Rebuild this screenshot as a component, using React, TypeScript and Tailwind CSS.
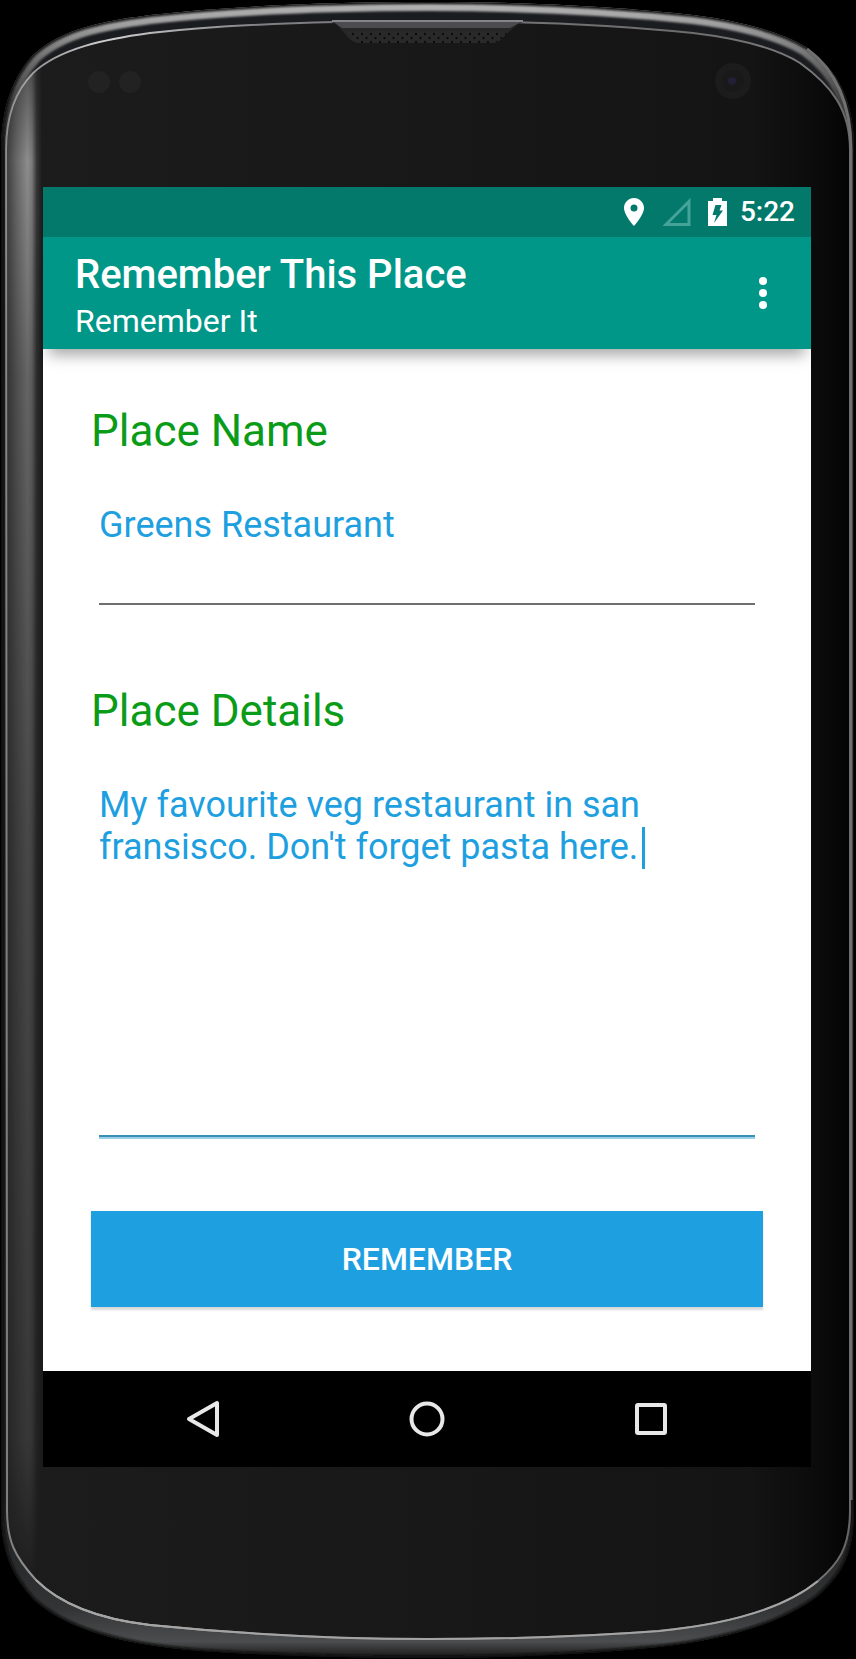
import { useState } from "react";

const NAV_ICON = "h-12 w-12 fill-none stroke-[#e8e8e8] stroke-[4]";

// phone body drawn behind the screen ============================
function PhoneFrame() {
  const outer =
    "M1 150 C1 105 14 76 33 55 C62 28 105 21 150 15 C240 5 340 2 428 2 C516 2 600 5 693 15 C735 20 780 31 806 47 C838 70 854 100 854 150 V1510 C854 1555 842 1574 818 1596 C780 1625 720 1640 659 1647 C580 1655 500 1658 428 1658 C350 1658 280 1656 200 1651 C110 1644 62 1625 34 1600 C10 1574 1 1550 1 1510 Z";
  const inner =
    "M6 150 C6 108 20 86 33 73 C60 48 106 39 150 33 C240 23 340 21 428 21 C516 21 600 23 693 33 C735 38 776 48 800 63 C832 86 850 110 850 150 V1510 C850 1548 838 1564 818 1581 C780 1612 720 1625 659 1631 C580 1637 500 1639 428 1639 C350 1639 250 1635 150 1625 C90 1618 56 1600 36 1580 C14 1556 7 1540 7 1510 Z";

  return (
    <svg
      className="absolute inset-0 h-full w-full"
      viewBox="0 0 856 1659"
      preserveAspectRatio="none"
      aria-hidden="true"
    >
      <defs>
        <linearGradient id="rim" x1="0" y1="2" x2="0" y2="150" gradientUnits="userSpaceOnUse">
          <stop offset="0" stopColor="#b4b4b4" />
          <stop offset="0.15" stopColor="#a0a0a0" />
          <stop offset="0.4" stopColor="#6c6c6c" />
          <stop offset="0.7" stopColor="#3c3c3c" />
          <stop offset="1" stopColor="#222222" />
        </linearGradient>
        <linearGradient id="band" x1="0" y1="0" x2="0" y2="1">
          <stop offset="0" stopColor="#1b1c20" />
          <stop offset="0.9" stopColor="#1a1b1c" />
          <stop offset="0.97" stopColor="#333435" />
          <stop offset="0.99" stopColor="#4c4d4e" />
          <stop offset="1" stopColor="#161616" />
        </linearGradient>
        <linearGradient id="glass" x1="0" y1="0" x2="1" y2="0">
          <stop offset="0" stopColor="#1c1c1c" />
          <stop offset="0.5" stopColor="#181818" />
          <stop offset="0.88" stopColor="#141414" />
          <stop offset="0.96" stopColor="#0b0b0b" />
          <stop offset="1" stopColor="#040404" />
        </linearGradient>
        <linearGradient id="glare" x1="6" x2="42" y1="0" y2="0" gradientUnits="userSpaceOnUse">
          <stop offset="0" stopColor="#fff" stopOpacity="0.14" />
          <stop offset="0.3" stopColor="#fff" stopOpacity="0.34" />
          <stop offset="0.6" stopColor="#fff" stopOpacity="0.5" />
          <stop offset="0.72" stopColor="#fff" stopOpacity="0.42" />
          <stop offset="0.85" stopColor="#fff" stopOpacity="0.12" />
          <stop offset="1" stopColor="#fff" stopOpacity="0" />
        </linearGradient>
        <linearGradient id="fade" x1="0" x2="0" y1="70" y2="1590" gradientUnits="userSpaceOnUse">
          <stop offset="0" stopColor="#fff" stopOpacity="0.5" />
          <stop offset="0.06" stopColor="#fff" />
          <stop offset="0.2" stopColor="#fff" stopOpacity="0.65" />
          <stop offset="0.5" stopColor="#fff" stopOpacity="0.4" />
          <stop offset="0.9" stopColor="#fff" stopOpacity="0.25" />
          <stop offset="1" stopColor="#fff" stopOpacity="0" />
        </linearGradient>
        <linearGradient id="edge" x1="0" x2="1" y1="0" y2="0">
          <stop offset="0" stopColor="#7c7c7c" />
          <stop offset="0.12" stopColor="#d0d0d0" />
          <stop offset="0.3" stopColor="#808085" />
          <stop offset="0.8" stopColor="#6c6c6c" />
          <stop offset="0.95" stopColor="#7a7a7a" />
          <stop offset="1" stopColor="#666666" />
        </linearGradient>
        <pattern id="mesh" width="9" height="8" patternUnits="userSpaceOnUse">
          <rect width="9" height="8" fill="#292929" />
          <circle cx="2" cy="2" r="1.2" fill="#0c0c0c" />
          <circle cx="6.5" cy="6" r="1.2" fill="#0c0c0c" />
        </pattern>
        <mask id="glareMask">
          <rect width="60" height="1659" fill="url(#fade)" />
        </mask>
        <clipPath id="outerClip">
          <path d={outer} />
        </clipPath>
        <clipPath id="innerClip">
          <path d={inner} />
        </clipPath>
        <filter id="soften">
          <feGaussianBlur stdDeviation="1" />
        </filter>
      </defs>

      <path d={outer} fill="url(#band)" />
      <g clipPath="url(#outerClip)">
        <path
          d="M1 150 C1 105 14 76 33 55 C62 28 105 21 150 15 C240 5 340 2 428 2 C516 2 600 5 693 15 C735 20 780 31 806 47 C838 70 854 100 854 150"
          fill="none"
          stroke="url(#rim)"
          strokeWidth="18"
          filter="url(#soften)"
        />
        <path d={outer} fill="none" stroke="#101010" strokeWidth="4" filter="url(#soften)" />
      </g>
      <path d={inner} fill="url(#glass)" stroke="url(#edge)" strokeWidth="2" />
      <path
        d="M818 1581 C780 1612 720 1625 659 1631 C580 1637 500 1639 428 1639 C350 1639 250 1635 150 1625 C90 1618 56 1600 36 1580"
        fill="none"
        stroke="#a4a4a4"
        strokeWidth="2"
      />
      <g clipPath="url(#innerClip)">
        <rect x="6" width="37" height="1659" fill="url(#glare)" mask="url(#glareMask)" />
      </g>
      <path d="M807 49 C838 72 851 106 851 150 V1500" fill="none" stroke="#707070" strokeWidth="3" />

      {/* speaker */}
      <path d="M330 22 H524 C518 22 514 29 506 34 Q500 43 492 43 H360 Q351 43 345 34 C339 28 336 22 330 22 Z" fill="#262626" />
      <path d="M346 31 H508 Q500 43 492 43 H360 Q351 43 346 31 Z" fill="url(#mesh)" />
      <path d="M332 21 H523 L510 28 H342 Z" fill="#4c4c50" />
      <path d="M332 21 H523" stroke="#85858a" strokeWidth="2" />

      {/* sensors and camera */}
      <circle cx="99" cy="82" r="11" fill="#222222" />
      <circle cx="130" cy="82" r="11" fill="#222222" />
      <circle cx="733" cy="81" r="18" fill="#1c1c1c" />
      <circle cx="733" cy="81" r="11" fill="#191919" />
      <circle cx="732" cy="81" r="4" fill="#211f33" />
    </svg>
  );
}

function StatusBar() {
  return (
    <div className="flex h-[50px] items-center justify-end bg-[#02796b] pr-4 text-white">
      <svg className="mr-4 h-7 w-5 fill-white" viewBox="0 0 20 28" aria-label="Location">
        <path fillRule="evenodd" d="M10 0 C4.500 0 0 4.500 0 10 C0 17 10 28 10 28 C10 28 20 17 20 10 C20 4.500 15.500 0 10 0 Z M10 6.500 A3.500 3.500 0 1 1 10 13.500 A3.500 3.500 0 1 1 10 6.500 Z" />
      </svg>
      <svg className="mr-4 h-7 w-8 fill-none stroke-[#45a398] stroke-3" viewBox="0 0 32 28" aria-label="No signal">
        <path d="M6 26.500 H29 V3.500 Z" />
      </svg>
      <svg className="mr-3 h-7 w-5 fill-white" viewBox="0 0 20 28" aria-label="Charging">
        <path fillRule="evenodd" d="M5 0 H14 V3 H19 V28 H0 V3 H5 Z M7.500 7 H13.500 L11.500 12.500 H15 L6 25 L8.500 17 H4.500 Z" />
      </svg>
      <span className="text-[28px] leading-8 font-medium">5:22</span>
    </div>
  );
}

function NavBar() {
  return (
    <nav className="flex h-24 items-center justify-center gap-44 bg-black">
      <button type="button" aria-label="Back">
        <svg className={NAV_ICON} viewBox="0 0 48 48">
          <path d="M38 8 V40 L10 24 Z" strokeLinejoin="round" />
        </svg>
      </button>
      <button type="button" aria-label="Home">
        <svg className={NAV_ICON} viewBox="0 0 48 48">
          <circle cx="24" cy="24" r="15.500" />
        </svg>
      </button>
      <button type="button" aria-label="Recent apps">
        <svg className={NAV_ICON} viewBox="0 0 48 48">
          <rect x="10" y="10" width="28" height="28" rx="1" />
        </svg>
      </button>
    </nav>
  );
}

export default function App() {
  // states ============================
  const [name, setName] = useState("Greens Restaurant");
  const [details, setDetails] = useState(
    "My favourite veg restaurant in san fransisco. Don't forget pasta here."
  );

  //================================= render =============================
  return (
    <div className="relative flex min-h-screen flex-col bg-black pt-[187px] pr-[45px] pb-48 pl-[43px] font-[Roboto,sans-serif]">
      <PhoneFrame />
      <div className="relative flex flex-1 flex-col bg-white">
        <StatusBar />
        <header className="flex h-28 items-center justify-between bg-[#009788] px-8 text-white shadow-[0_12px_14px_-6px_rgba(0,0,0,0.35)]">
          <div className="pt-2">
            <h1 className="text-[40px] leading-12 font-medium">Remember This Place</h1>
            <p className="text-[32px] leading-11">Remember It</p>
          </div>
          <button type="button" aria-label="More options">
            <svg className="h-8 w-8 fill-white" viewBox="0 0 32 32">
              <circle cx="16" cy="4" r="4" />
              <circle cx="16" cy="16" r="4" />
              <circle cx="16" cy="28" r="4" />
            </svg>
          </button>
        </header>

        <form className="flex flex-1 flex-col px-12 pt-[50px]" onSubmit={(e) => e.preventDefault()}>
          <label htmlFor="name" className="h-16 text-[44px] leading-[64px] text-[#0a9b18]">
            Place Name
          </label>
          <div className="mx-2 mt-10 h-[102px] border-b-2 border-[#6e6e6e]">
            <input
              id="name"
              type="text"
              value={name}
              onChange={(e) => setName(e.target.value)}
              className="h-[44px] w-full text-[36px] leading-[42px] text-[#1e9fe0] outline-none"
            />
          </div>

          <label htmlFor="details" className="mt-[74px] h-16 text-[44px] leading-[64px] text-[#0a9b18]">
            Place Details
          </label>
          <div className="relative mx-2 mt-10 flex flex-1 flex-col border-b-2 border-[#3a8fb5] pt-px shadow-[0_2px_0_#9bd0ea]">
            <textarea
              id="details"
              value={details}
              onChange={(e) => setDetails(e.target.value)}
              className="w-full flex-1 resize-none text-[36px] leading-[42px] text-[#1e9fe0] outline-none"
            />
            {/* text cursor */}
            <span className="absolute top-[44px] left-[543px] h-[42px] w-[3px] bg-[#1e9fe0]" />
          </div>

          <button
            type="submit"
            className="mt-[74px] mb-16 h-24 bg-[#1e9fe0] text-[32px] font-medium text-white shadow-[0_3px_2px_rgba(0,0,0,0.15)]"
          >
            REMEMBER
          </button>
        </form>

        <NavBar />
      </div>
    </div>
  );
}
